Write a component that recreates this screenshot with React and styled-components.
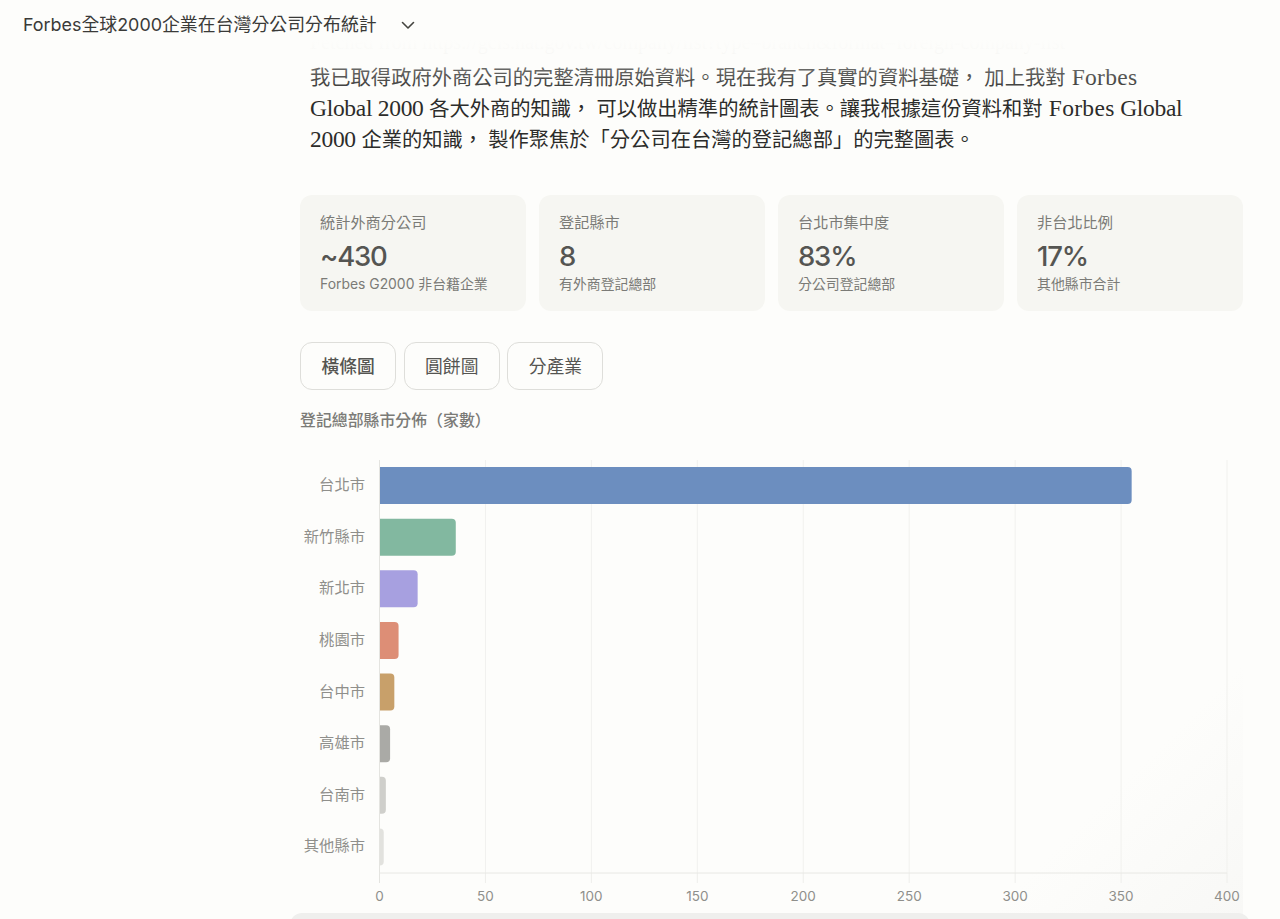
import React from "react";
import styled, { createGlobalStyle } from "styled-components";

const sans = `Inter, "Noto Sans CJK TC", sans-serif`;
const serif = `"Liberation Serif", "Noto Sans CJK TC", serif`;

const GlobalStyle = createGlobalStyle`
  html, body { margin: 0; padding: 0; background: #fdfdfb; }
  body { font-family: ${sans}; overflow: hidden; }
`;

const Page = styled.div`
  position: relative;
  width: 1280px;
  height: 919px;
  overflow: hidden;
  background: #fdfdfb;
`;

const TopBar = styled.header`
  position: absolute;
  top: 0;
  left: 0;
  right: 0;
  height: 96px;
  padding: 14px 23px 0;
  box-sizing: border-box;
  display: flex;
  align-items: flex-start;
  gap: 23px;
  background: linear-gradient(
    to bottom,
    rgba(253, 253, 251, 1) 0,
    rgba(253, 253, 251, 1) 40px,
    rgba(253, 253, 251, 0.88) 52px,
    rgba(253, 253, 251, 0.3) 68px,
    rgba(253, 253, 251, 0.08) 88px,
    rgba(253, 253, 251, 0) 96px
  );
`;

const Title = styled.div`
  font-size: 17.9px;
  line-height: 22px;
  color: #3a3a38;
  white-space: nowrap;
`;

const Chevron = styled.svg`
  width: 16px;
  height: 16px;
  margin-top: 3px;
  fill: none;
  stroke: #44443f;
  stroke-width: 1.6;
  stroke-linecap: round;
  stroke-linejoin: round;
`;

const Main = styled.main`
  padding: 31px 37px 0 300px;
`;

const Ghost = styled.div`
  padding-left: 10px;
  font-family: ${serif};
  font-size: 20px;
  line-height: 22px;
  color: #dededa;
  white-space: nowrap;
`;

const Message = styled.p`
  margin: 10px 0 0;
  padding-left: 10px;
  font-family: ${serif};
  font-size: 20.3px;
  line-height: 31px;
  color: #2c2c2a;
`;

const Latin = styled.span`
  font-size: 23.5px;
  line-height: 1;
  letter-spacing: ${(p) => (p.$wide ? "0.3px" : "-0.3px")};
`;

const Stats = styled.section`
  margin-top: 39px;
  display: grid;
  grid-template-columns: repeat(4, 1fr);
  gap: 13px;
`;

const Stat = styled.div`
  height: 116px;
  box-sizing: border-box;
  padding: 17px 20px 0;
  border-radius: 12px;
  background: #f6f6f2;
`;

const StatLabel = styled.div`
  font-size: 15.2px;
  line-height: 21px;
  color: #7b7b77;
`;

const StatValue = styled.div`
  margin-top: 6px;
  font-size: 27.5px;
  line-height: 34px;
  font-weight: 500;
  letter-spacing: -1.2px;
  color: #555552;
`;

const StatNote = styled.div`
  margin-top: 2px;
  font-size: 13.9px;
  line-height: 19px;
  color: #7b7b77;
`;

const Tabs = styled.nav`
  margin-top: 31px;
  display: flex;
  gap: 7.3px;
`;

const Tab = styled.button`
  width: 96.3px;
  height: 48px;
  padding: 0 0 2px;
  border: 1px solid #dededa;
  border-radius: 12px;
  background: transparent;
  font-family: ${sans};
  font-size: 17.8px;
  font-weight: ${(p) => (p.$active ? 500 : 400)};
  color: #555552;
`;

const ChartTitle = styled.h2`
  margin: 20px 0 0;
  font-size: 15.9px;
  line-height: 21px;
  font-weight: 500;
  color: #7b7b77;
`;

const ChartWrap = styled.div`
  margin-top: 21px;
  height: 463px;
  background: linear-gradient(
    135deg,
    #fdfdfb 0,
    #fdfdfb 82%,
    #f8f8f6 100%
  );
`;

const Chart = styled.svg`
  display: block;
  width: 943px;
  height: 463px;
  font-family: ${sans};
`;

const Bottom = styled.div`
  position: absolute;
  left: 290px;
  bottom: -20px;
  width: 960px;
  height: 26px;
  border-radius: 12px;
  background: #efefed;
`;

const stats = [
  { label: "統計外商分公司", value: "~430", note: "Forbes G2000 非台籍企業" },
  { label: "登記縣市", value: "8", note: "有外商登記總部" },
  { label: "台北市集中度", value: "83%", note: "分公司登記總部" },
  { label: "非台北比例", value: "17%", note: "其他縣市合計" },
];

const cities = [
  { name: "台北市", count: 355, color: "#6c8ebf" },
  { name: "新竹縣市", count: 36, color: "#82b8a0" },
  { name: "新北市", count: 18, color: "#a7a0e0" },
  { name: "桃園市", count: 9, color: "#dd8e76" },
  { name: "台中市", count: 7, color: "#c8a06a" },
  { name: "高雄市", count: 5, color: "#aaaaa6" },
  { name: "台南市", count: 3, color: "#cfcfcb" },
  { name: "其他縣市", count: 2, color: "#e2e2de" },
];

const ticks = [0, 50, 100, 150, 200, 250, 300, 350, 400];

// chart coordinates are relative to the ChartWrap box (page x 300, y 452)
const X0 = 79.5;
const XSCALE = 847.5 / 400;
const YTOP = 8;
const YBOTTOM = 421;
const BAND = 51.63;
const BAR_H = 37;

function barPath(width, y) {
  const r = Math.min(4, width);
  const x = X0;
  return `M${x} ${y}H${x + width - r}Q${x + width} ${y} ${x + width} ${y + r}V${y + BAR_H - r}Q${x + width} ${y + BAR_H} ${x + width - r} ${y + BAR_H}H${x}Z`;
}

function BarChart() {
  return (
    <Chart viewBox="0 0 943 463">
      {ticks.map((t) => {
        const x = X0 + t * XSCALE;
        return (
          <g key={t}>
            <line x1={x} x2={x} y1={YTOP} y2={t === 0 ? YTOP : YBOTTOM} stroke="#f1f1ee" />
            <line x1={x} x2={x} y1={YBOTTOM} y2={YBOTTOM + 10} stroke="#eeeeeb" />
            <text x={x} y={449} textAnchor="middle" fontSize="13.5" fill="#8f8f8b">
              {t}
            </text>
          </g>
        );
      })}
      {cities.map((c, i) => {
        const y = YTOP + 7 + i * BAND;
        return (
          <g key={c.name}>
            <text x={65} y={y + 23} textAnchor="end" fontSize="15.3" fill="#8f8f8b">
              {c.name}
            </text>
            <path d={barPath(c.count * XSCALE, y)} fill={c.color} />
          </g>
        );
      })}
      <line x1={X0} x2={X0} y1={YTOP} y2={YBOTTOM + 10} stroke="#e4e4e0" />
      <line x1={X0} x2={X0 + 400 * XSCALE} y1={YBOTTOM} y2={YBOTTOM} stroke="#e8e8e4" />
    </Chart>
  );
}

export default function App() {
  return (
    <Page>
      <GlobalStyle />
      <Main>
        <Ghost>Fetched from https://gcis.nat.gov.tw/company/list?type=branch&amp;format=foreign-company-list</Ghost>
        <Message>
          我已取得政府外商公司的完整清冊原始資料。現在我有了真實的資料基礎， 加上我對<Latin $wide> Forbes</Latin>
          <br />
          <Latin>Global 2000 </Latin>各大外商的知識， 可以做出精準的統計圖表。讓我根據這份資料和對<Latin $wide> Forbes</Latin><Latin> Global</Latin>
          <br />
          <Latin>2000 </Latin>企業的知識， 製作聚焦於「分公司在台灣的登記總部」的完整圖表。
        </Message>
        <Stats>
          {stats.map((s) => (
            <Stat key={s.label}>
              <StatLabel>{s.label}</StatLabel>
              <StatValue>{s.value}</StatValue>
              <StatNote>{s.note}</StatNote>
            </Stat>
          ))}
        </Stats>
        <Tabs>
          <Tab $active>橫條圖</Tab>
          <Tab>圓餅圖</Tab>
          <Tab>分產業</Tab>
        </Tabs>
        <ChartTitle>登記總部縣市分佈（家數）</ChartTitle>
        <ChartWrap>
          <BarChart />
        </ChartWrap>
      </Main>
      <TopBar>
        <Title>Forbes全球2000企業在台灣分公司分布統計</Title>
        <Chevron viewBox="0 0 16 16">
          <path d="M2.5 5.5 8 11l5.5-5.5" />
        </Chevron>
      </TopBar>
      <Bottom />
    </Page>
  );
}
